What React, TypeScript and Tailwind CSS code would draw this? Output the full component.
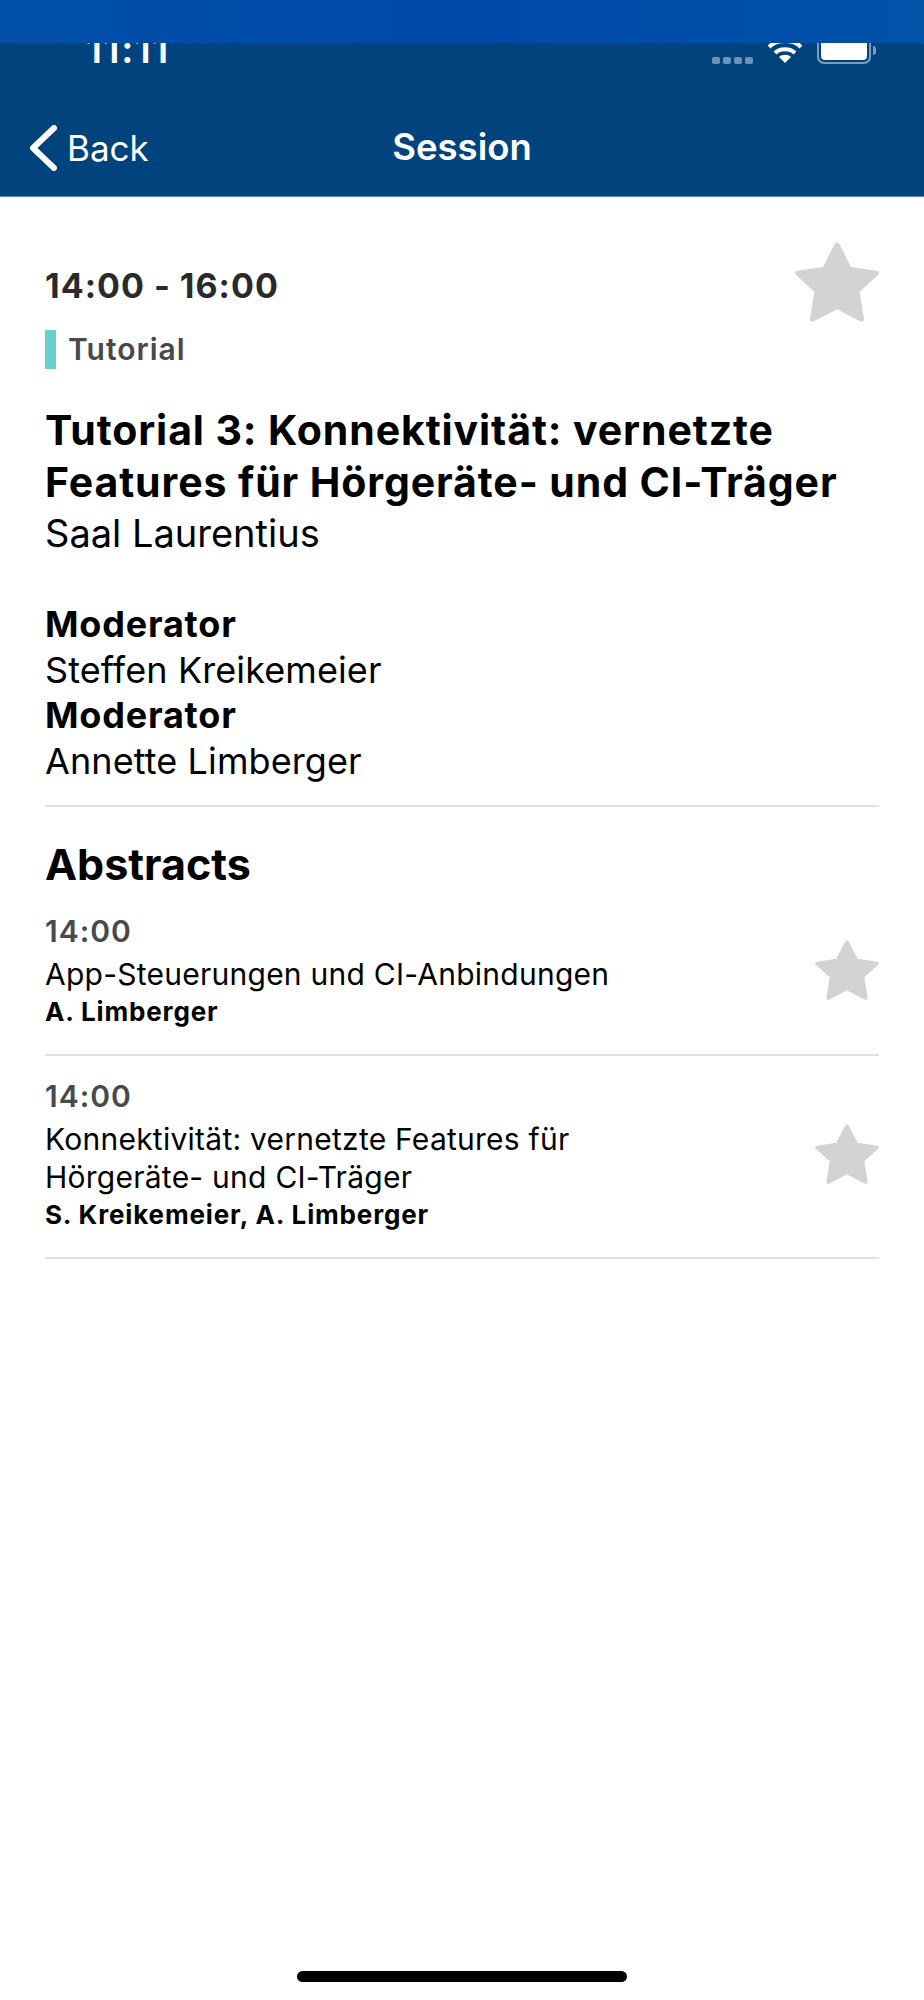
const font = { fontFamily: 'Inter, "Liberation Sans", sans-serif' }

function Star({ className }: { className: string }) {
  return (
    <svg viewBox="0 0 48 48" preserveAspectRatio="none" className={className} fill="#d3d3d3">
      <path d="M24 0.3 C24.7 0.3 25.1 0.8 25.4 1.4 L32 15 L46.6 17.3 C48 17.6 48.3 18.9 47.4 19.8 L37 29.8 L39.4 46 C39.6 47.5 38.4 48.2 37.2 47.6 L24 40.3 L10.8 47.6 C9.6 48.2 8.4 47.5 8.6 46 L11 29.8 L0.6 19.8 C-0.3 18.9 0 17.6 1.4 17.3 L16 15 L22.6 1.4 C22.9 0.8 23.3 0.3 24 0.3 Z" />
    </svg>
  )
}

function AbstractRow({ title, authors, starClass }: { title: string[]; authors: string; starClass: string }) {
  return (
    <div className="flex items-start justify-between border-b-2 border-[#e2e2e4] pt-[20px] pb-[23px]">
      <div>
        <p className="text-[30px] leading-[40px] font-semibold tracking-[1px] text-[#48484f] mb-[4px]">14:00</p>
        {title.map(line => (
          <p key={line} className="text-[30px] leading-[38px] tracking-[0.25px] text-black">{line}</p>
        ))}
        <p className="text-[26px] leading-[38px] font-bold tracking-[0.85px] text-black">{authors}</p>
      </div>
      <Star className={starClass} />
    </div>
  )
}

export default function App() {
  return (
    <div className="relative w-[924px] h-[2000px] bg-white overflow-hidden" style={font}>
      <div className="absolute inset-x-0 top-0 h-[43px] bg-gradient-to-r from-[#0250a8] via-[#0048aa] to-[#0252a8] z-10" />

      <header className="h-[197px] bg-[#01437c] border-b border-[#5b86ad] text-white">
        <div className="flex items-end justify-between h-[64px] pl-[86px] pr-[48px]">
          <span className="text-[38px] leading-[38px] font-semibold tracking-[1.5px] -mb-[4px]">11:11</span>
          <div className="flex items-end">
            <div className="flex gap-[3px] mr-[14px]">
              <span className="w-[8px] h-[7px] rounded-[2px] bg-[#6d93b6]" />
              <span className="w-[8px] h-[7px] rounded-[2px] bg-[#6d93b6]" />
              <span className="w-[8px] h-[7px] rounded-[2px] bg-[#6d93b6]" />
              <span className="w-[8px] h-[7px] rounded-[2px] bg-[#6d93b6]" />
            </div>
            <svg viewBox="0 0 36 26" className="w-[36px] h-[26px] mr-[14px]" fill="none" stroke="white" strokeWidth="4">
              <path d="M2 9 C10 1 26 1 34 9" />
              <path d="M8 15 C13 10 23 10 28 15" />
              <path d="M18 25 L12 19 C15 16 21 16 24 19 Z" fill="white" stroke="none" />
            </svg>
            <div className="flex items-center">
              <div className="w-[54px] h-[32px] rounded-[7px] border-2 border-[#7e9cba] p-[2px]">
                <div className="w-full h-full rounded-[4px] bg-white" />
              </div>
              <span className="w-[3px] h-[9px] ml-[2px] mt-[5px] bg-[#7e9cba] rounded-r" />
            </div>
          </div>
        </div>
        <div className="relative flex items-center justify-center h-[72px] mt-[47px]">
          <div className="absolute left-[29px] top-[13px] flex items-center">
            <svg viewBox="0 0 28 46" className="w-[28px] h-[46px] mr-[10px]" fill="none" stroke="white" strokeWidth="6" strokeLinecap="round" strokeLinejoin="round">
              <path d="M25 3 L4 23 L25 43" />
            </svg>
            <span className="text-[35px] leading-[48px]">Back</span>
          </div>
          <span className="text-[36.5px] font-semibold">Session</span>
        </div>
      </header>

      <main className="px-[45px]">
        <div className="flex items-start justify-between pt-[45px]">
          <div>
            <p className="text-[34px] leading-[50px] font-bold tracking-[1px] text-[#2a2a2e] mt-[19px]">14:00 - 16:00</p>
            <div className="flex items-center h-[39px] mt-[19px] border-l-[11px] border-[#66d0ce] pl-[12px]">
              <span className="text-[30px] font-semibold tracking-[1px] text-[#48484f]">Tutorial</span>
            </div>
          </div>
          <Star className="w-[84px] h-[80px]" />
        </div>

        <h1 className="text-[41px] leading-[52px] font-bold tracking-[0.9px] text-black mt-[35px]">
          Tutorial 3: Konnektivität: vernetzte
          <br />
          Features für Hörgeräte- und CI-Träger
        </h1>
        <p className="text-[38px] leading-[46px] text-black mt-[2px]">Saal Laurentius</p>

        <div className="mt-[46px] pb-[21px] border-b-2 border-[#e2e2e4] text-[36px] leading-[45.5px] tracking-[0.1px] text-black">
          <p className="font-bold tracking-[0.8px]">Moderator</p>
          <p>Steffen Kreikemeier</p>
          <p className="font-bold tracking-[0.8px]">Moderator</p>
          <p>Annette Limberger</p>
        </div>

        <h2 className="text-[43px] leading-[54px] font-bold text-black mt-[30px]">Abstracts</h2>

        <AbstractRow
          title={['App-Steuerungen und CI-Anbindungen']}
          authors="A. Limberger"
          starClass="w-[64px] h-[60px] mt-[29px]"
        />
        <AbstractRow
          title={['Konnektivität: vernetzte Features für', 'Hörgeräte- und CI-Träger']}
          authors="S. Kreikemeier, A. Limberger"
          starClass="w-[64px] h-[60px] mt-[48px]"
        />
      </main>

      <div className="absolute bottom-[18px] left-[297px] w-[330px] h-[11px] rounded-full bg-black" />
    </div>
  )
}
